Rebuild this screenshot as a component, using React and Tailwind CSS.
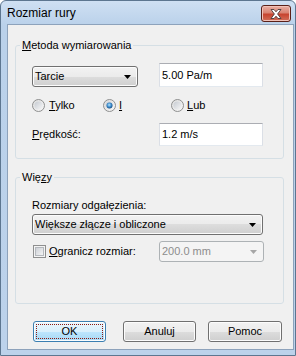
import React from 'react';

const btnBg =
  'bg-[linear-gradient(#f2f2f2,#ebebeb_50%,#dddddd_50%,#cfcfcf)] shadow-[inset_0_0_0_1px_#fcfcfc]';

const Arrow = ({ color = '#000' }) => (
  <svg width="7" height="4" viewBox="0 0 7 4" className="shrink-0">
    <polygon points="0,0 7,0 3.5,4" fill={color} />
  </svg>
);

const Combo = ({ children, className = '' }) => (
  <div
    className={`h-[21px] border border-[#707070] rounded-[3px] ${btnBg} flex items-center justify-between pl-[2px] pr-[6px] ${className}`}
  >
    <span>{children}</span>
    <Arrow />
  </div>
);

const TextBox = ({ children, className = '' }) => (
  <div
    className={`bg-white border border-[#abadb3] border-x-[#dbdfe6] border-b-[#e3e9ef] flex items-center pl-[2px] ${className}`}
  >
    {children}
  </div>
);

const Radio = ({ checked }) => (
  <svg width="13" height="13" viewBox="0 0 13 13" className="shrink-0">
    <defs>
      <linearGradient id="ro" x1="0" y1="0" x2="1" y2="1">
        <stop offset="0" stopColor="#dcdcdc" />
        <stop offset="1" stopColor="#f8f8f8" />
      </linearGradient>
      <linearGradient id="ri" x1="0" y1="0" x2="1" y2="1">
        <stop offset="0" stopColor="#c6cbd2" />
        <stop offset="1" stopColor="#f6f6f6" />
      </linearGradient>
      <radialGradient id="rc" cx="0.45" cy="0.4" r="0.6">
        <stop offset="0" stopColor="#b8e6fc" />
        <stop offset="0.55" stopColor="#3f8ecf" />
        <stop offset="1" stopColor="#174f83" />
      </radialGradient>
    </defs>
    <circle cx="6.5" cy="6.5" r="6" fill="url(#ro)" stroke="#8e8f8f" />
    <circle cx="6.5" cy="6.5" r="4" fill="url(#ri)" />
    {checked && <circle cx="6.5" cy="6.5" r="3" fill="url(#rc)" />}
  </svg>
);

const CheckBox = () => (
  <svg width="13" height="13" viewBox="0 0 13 13" className="shrink-0">
    <defs>
      <linearGradient id="cb" x1="0" y1="0" x2="1" y2="1">
        <stop offset="0" stopColor="#cbcfd5" />
        <stop offset="1" stopColor="#f6f6f6" />
      </linearGradient>
    </defs>
    <rect x="0.5" y="0.5" width="12" height="12" fill="#f4f4f4" stroke="#8e8f8f" />
    <rect x="2.5" y="2.5" width="8" height="8" fill="url(#cb)" stroke="#b4b8bd" strokeWidth="1" />
  </svg>
);

const Button = ({ children, className = '' }) => (
  <div
    className={`h-[21px] border border-[#707070] rounded-[3px] ${btnBg} flex items-center justify-center ${className}`}
  >
    {children}
  </div>
);

const Group = ({ legend, children, className = '' }) => (
  <fieldset className={`ml-[7px] w-[269px] border border-[#d5dfe5] rounded-[3px] ${className}`}>
    <legend className="ml-[4px] px-[2px] leading-[13px]">{legend}</legend>
    <div className="pl-[16px]">{children}</div>
  </fieldset>
);

export default function App() {
  return (
    <div className="w-[296px] h-[356px] flex flex-col overflow-hidden border border-[#5d7690] rounded-t-[6px] bg-[linear-gradient(#cfe0f3,#bad1ea_24px,#bcd2eb)] font-['Liberation_Sans',Arial,sans-serif] text-[11px] text-black">
      <div className="h-[23px] shrink-0 flex items-start justify-between">
        <div className="pl-[6px] pt-[5px] text-[12px] leading-[15px]">Rozmiar rury</div>
        <div className="mt-[4px] mr-[4px] w-[30px] h-[17px] rounded-[3px] border border-[#5a2018] bg-[linear-gradient(#e9b0a5,#d98473_45%,#c7442f_55%,#d2705a)] shadow-[inset_0_0_0_1px_#f1c2b8] flex items-center justify-center">
          <svg width="12" height="10" viewBox="0 0 12 10">
            <path
              d="M1 0.5h3l2 2.3 2-2.3h3l-3.4 4.5 3.4 4.5h-3l-2-2.3-2 2.3h-3l3.4-4.5z"
              fill="#fff"
              stroke="#4a3b3b"
              strokeWidth="0.9"
            />
          </svg>
        </div>
      </div>

      <div className="flex-1 ml-[6px] mr-[1px] mb-[5px] border border-[#8da2bb] bg-[#f0f0f0] flex flex-col pt-[14px]">
        <Group
          legend={
            <span>
              <u>M</u>etoda wymiarowania
            </span>
          }
          className="pt-[11px] pb-[12px]"
        >
          <div className="flex items-end h-[24px]">
            <Combo className="w-[106px]">Tarcie</Combo>
            <TextBox className="ml-[21px] w-[104px] h-[24px]">5.00 Pa/m</TextBox>
          </div>
          <div className="mt-[12px] flex items-center h-[13px] leading-[13px]">
            <div className="w-[71px] flex items-center gap-[4px]">
              <Radio />
              <span>
                <u>T</u>ylko
              </span>
            </div>
            <div className="w-[68px] flex items-center gap-[3px]">
              <Radio checked />
              <span>
                <u>I</u>
              </span>
            </div>
            <div className="flex items-center gap-[3px]">
              <Radio />
              <span>
                <u>L</u>ub
              </span>
            </div>
          </div>
          <div className="mt-[11px] flex items-center h-[23px]">
            <div className="w-[127px]">
              <u>P</u>rędkość:
            </div>
            <TextBox className="w-[104px] h-[23px]">1.2 m/s</TextBox>
          </div>
        </Group>

        <Group
          legend={
            <span>
              Wię<u>z</u>y
            </span>
          }
          className="mt-[12px] pt-[15px] pb-[41px]"
        >
          <div className="leading-[13px]">Rozmiary odgałęzienia:</div>
          <Combo className="mt-[2px] w-[231px]">Większe złącze i obliczone</Combo>
          <div className="mt-[6px] flex items-center h-[21px]">
            <div className="w-[127px] flex items-center gap-[3px] pl-[1px]">
              <CheckBox />
              <span>
                <u>O</u>granicz rozmiar:
              </span>
            </div>
            <div className="w-[105px] h-[21px] border border-[#adb2b5] rounded-[3px] bg-[#f4f4f4] flex items-center justify-between pl-[2px] pr-[6px] text-[#8d8d8d]">
              <span>200.0 mm</span>
              <Arrow color="#a6a6a6" />
            </div>
          </div>
        </Group>

        <div className="mt-[17px] ml-[25px] flex items-center">
          <div className="w-[73px] h-[21px] border border-[#3c7fb1] rounded-[3px] bg-[linear-gradient(#eaf6fd,#d9f0fc_50%,#bee6fd_50%,#a7d9f5)] shadow-[inset_0_0_0_1px_#fbfdfe] p-[2px]">
            <div className="w-full h-full border border-dotted border-[#8b1a12] flex items-center justify-center">
              OK
            </div>
          </div>
          <Button className="ml-[17px] w-[73px]">Anuluj</Button>
          <Button className="ml-[12px] w-[74px]">Pomoc</Button>
        </div>
      </div>
    </div>
  );
}
